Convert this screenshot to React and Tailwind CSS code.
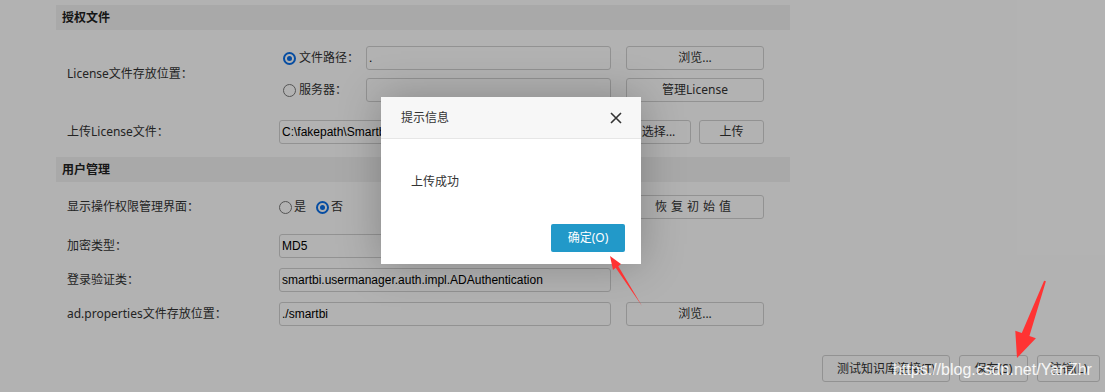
import React from "react";

const cjk = "font-[family-name:'Noto_Sans','Noto_Sans_CJK_SC',sans-serif]";
const arial = "font-[family-name:'Liberation_Sans','Noto_Sans_CJK_SC',sans-serif]";

function Radio({ checked }) {
  if (checked) {
    return (
      <span className="w-[13px] h-[13px] rounded-full border-2 border-[#0a6fe8] bg-white flex items-center justify-center shrink-0">
        <span className="w-[5px] h-[5px] rounded-full bg-[#0a6fe8]" />
      </span>
    );
  }
  return <span className="w-[13px] h-[13px] rounded-full border border-[#7a7a7a] bg-white shrink-0" />;
}

function Input({ className, value }) {
  return (
    <div
      className={
        "h-[24px] border border-[#d2d2d2] rounded-[3px] bg-white flex items-center pl-[2px] text-[12px] text-black leading-none " +
        arial +
        " " +
        className
      }
    >
      {value}
    </div>
  );
}

function Btn({ className, children }) {
  return (
    <div
      className={
        "h-[24px] border border-[#d2d2d2] rounded-[3px] bg-white flex items-center justify-center text-[12px] text-[#333] leading-none " +
        className
      }
    >
      {children}
    </div>
  );
}

function Label({ children }) {
  return <div className="w-[223px] pl-[11px] text-[12px] text-[#333] leading-none shrink-0">{children}</div>;
}

function Header({ children }) {
  return (
    <div className="h-[25px] bg-[#f2f2f2] pl-[6px] flex items-center font-bold text-[12px] text-[#222] leading-none">
      {children}
    </div>
  );
}

export default function App() {
  return (
    <div className={"relative w-[1105px] h-[392px] overflow-hidden bg-white " + cjk}>
      <div className="ml-[56px] w-[734px] pt-[5px]">
        <Header>授权文件</Header>

        <div className="mt-[16px] flex items-center">
          <Label>License文件存放位置：</Label>
          <div className="flex flex-col gap-[8px]">
            <div className="flex items-center h-[24px]">
              <div className="w-[87px] flex items-center pl-[4px] gap-[3px] text-[12px] text-[#333] leading-none">
                <Radio checked />
                <span>文件路径：</span>
              </div>
              <Input className="w-[245px]" value="." />
              <Btn className="ml-[15px] w-[138px]">浏览...</Btn>
            </div>
            <div className="flex items-center h-[24px]">
              <div className="w-[87px] flex items-center pl-[4px] gap-[3px] text-[12px] text-[#333] leading-none">
                <Radio />
                <span>服务器：</span>
              </div>
              <Input className="w-[245px]" value="" />
              <Btn className="ml-[15px] w-[138px]">管理License</Btn>
            </div>
          </div>
        </div>

        <div className="mt-[18px] flex items-center">
          <Label>上传License文件：</Label>
          <Input className="w-[332px]" value="C:\fakepath\Smartbi.license" />
          <Btn className="ml-[15px] w-[65px]">选择...</Btn>
          <Btn className="ml-[8px] w-[65px]">上传</Btn>
        </div>

        <div className="mt-[13px]">
          <Header>用户管理</Header>
        </div>

        <div className="mt-[13px] flex items-center">
          <Label>显示操作权限管理界面：</Label>
          <div className="w-[332px] flex items-center text-[12px] text-[#333] leading-none">
            <Radio />
            <span className="ml-[2px]">是</span>
            <span className="ml-[10px]">
              <Radio checked />
            </span>
            <span className="ml-[2px]">否</span>
          </div>
          <Btn className="ml-[15px] w-[138px] tracking-[4px]">恢复初始值</Btn>
        </div>

        <div className="mt-[15px] flex items-center">
          <Label>加密类型：</Label>
          <Input className="w-[332px]" value="MD5" />
        </div>

        <div className="mt-[10px] flex items-center">
          <Label>登录验证类：</Label>
          <Input className="w-[332px]" value="smartbi.usermanager.auth.impl.ADAuthentication" />
        </div>

        <div className="mt-[10px] flex items-center">
          <Label>ad.properties文件存放位置：</Label>
          <Input className="w-[332px]" value="./smartbi" />
          <Btn className="ml-[15px] w-[138px]">浏览...</Btn>
        </div>
      </div>

      <div className="mt-[29px] flex justify-end gap-[9px] pr-[5px]">
        <Btn className="h-[27px] w-[128px]">测试知识库连接(T)</Btn>
        <Btn className="h-[27px] w-[69px]">保存(S)</Btn>
        <Btn className="h-[27px] w-[63px]">注销(L)</Btn>
      </div>

      {/* modal overlay */}
      <div className="absolute inset-0 bg-black/30" />

      {/* dialog */}
      <div className="absolute left-[381px] top-[97px] w-[260px] h-[167px] bg-white shadow-[0_0_40px_rgba(0,0,0,0.25)] flex flex-col">
        <div className="h-[42px] bg-[#f7f7f7] border-b border-[#e6e6e6] flex items-center justify-between pl-[20px] pr-[19px] shrink-0">
          <span className="text-[12px] text-[#333] leading-none">提示信息</span>
          <svg width="12" height="12" viewBox="0 0 12 12">
            <path d="M1 1L11 11M11 1L1 11" stroke="#333" strokeWidth="1.6" fill="none" />
          </svg>
        </div>
        <div className="pl-[30px] pt-[37px] text-[12px] text-[#333] leading-none">上传成功</div>
        <div className="mt-auto mb-[12px] pr-[16px] flex justify-end">
          <div className="w-[74px] h-[28px] bg-[#2299c9] rounded-[2px] flex items-center justify-center text-white text-[12px] leading-none">
            确定(O)
          </div>
        </div>
      </div>

      {/* red annotation arrows */}
      <svg className="absolute inset-0 pointer-events-none" width="1105" height="392" viewBox="0 0 1105 392">
        <polygon
          points="610,256 621,264 618.3,266.2 642,306 615.7,267.8 613,270"
          fill="#ff3333"
        />
        <polygon
          points="1017,358 1015.3,330.7 1021.8,333.1 1044.1,280.7 1045.9,281.3 1029.4,335.9 1035.9,338.3"
          fill="#ff3333"
        />
      </svg>

      {/* watermark */}
      <div
        className={
          "absolute left-[893px] top-[362px] text-[16px] leading-none text-white/90 whitespace-nowrap " + arial
        }
      >
        https://blog.csdn.net/YanZhr
      </div>
    </div>
  );
}
